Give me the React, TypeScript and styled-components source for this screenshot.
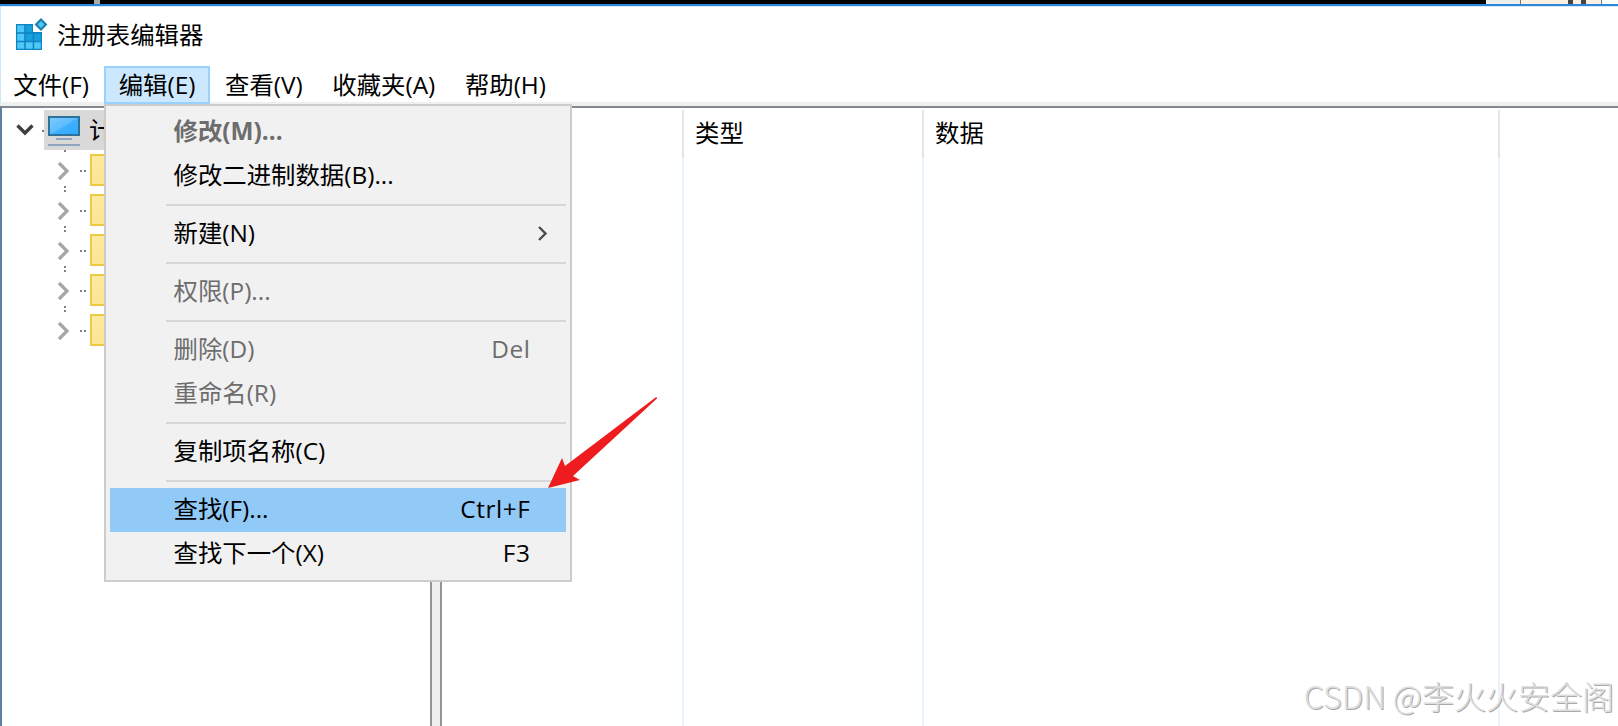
import styled, { createGlobalStyle, css } from 'styled-components';

const GlobalStyle = createGlobalStyle`
  body {
    margin: 0;
    overflow: hidden;
    background: #fff;
    color: #000;
    font: 24.4px/1 'Open Sans', 'Noto Sans CJK SC', sans-serif;
  }

  * {
    box-sizing: border-box;
  }
`;

const Screen = styled.div`
  position: relative;
  display: flex;
  flex-direction: column;
  width: 1618px;
  height: 726px;
  overflow: hidden;
`;

const Backdrop = styled.div`
  display: flex;
  flex: none;
  height: 4px;
  background: #000;
`;

const BackdropPart = styled.span<{ $width: number; $color: string; $edge?: boolean }>`
  flex: none;
  width: ${({ $width }) => $width}px;
  background: ${({ $color }) => $color};
  border-left: ${({ $edge }) => ($edge ? '1px solid #777' : 'none')};
`;

const Window = styled.div`
  flex: 1;
  display: flex;
  flex-direction: column;
  min-height: 0;
  border-top: 2px solid #2b88d8;
  background: #fff;
`;

const Chrome = styled.div`
  flex: none;
  height: 100px;
  border-left: 1px solid #cce6fb;
  border-top: 1px solid #d9ebfa;
  border-bottom: 4px solid #f0f0f0;
`;

const TitleBar = styled.header`
  display: flex;
  align-items: center;
  gap: 9px;
  height: 59px;
  padding: 0 0 3px 13px;
`;

const MenuBar = styled.nav`
  display: flex;
  margin-left: -2.5px;
`;

const MenuButton = styled.div<{ $open?: boolean }>`
  display: flex;
  align-items: center;
  height: 38px;
  padding: 0 12.8px;
  border: 2px solid transparent;
  white-space: nowrap;

  ${({ $open }) =>
    $open &&
    css`
      background: #cce8ff;
      border-color: #99d1ff;
    `}
`;

const Panes = styled.main`
  flex: 1;
  display: flex;
  min-height: 0;
  border-top: 2px solid #828790;
  border-left: 2px solid #5f809f;
`;

const Tree = styled.div`
  flex: none;
  width: 428px;
  padding-top: 2px;
`;

const TreeRow = styled.div<{ $root?: boolean }>`
  display: flex;
  align-items: center;
  height: 40px;
  padding-left: ${({ $root }) => ($root ? 14 : 53)}px;
`;

const Selection = styled.div`
  display: flex;
  align-items: center;
  gap: 9px;
  height: 40px;
  padding: 0 8px 0 4px;
  background: #d9d9d9;
`;

const Folder = styled.span`
  width: 40px;
  height: 32px;
  border: 2px solid #efc944;
  background: linear-gradient(135deg, #ffeaa3, #fbdf85);
`;

const Splitter = styled.div`
  flex: none;
  width: 12px;
  border: solid #8f959b;
  border-width: 0 2px;
  background: #f0f0f0;
`;

const List = styled.div`
  flex: 1;
  display: flex;
`;

const Column = styled.div<{ $width: number }>`
  flex: none;
  display: flex;
  flex-direction: column;
  width: ${({ $width }) => $width}px;

  &::after {
    content: '';
    flex: 1;
    border-right: 2px solid #e9f4ff;
  }
`;

const ColumnHeader = styled.div`
  height: 48px;
  margin-top: 2px;
  padding: 11px 0 0 11px;
  border-right: 2px solid #e5e5e5;
`;

const Menu = styled.div`
  position: absolute;
  top: 104px;
  left: 104px;
  width: 468px;
  height: 478px;
  padding: 4px;
  border: 2px solid #ccc;
  background: #f1f1f1;
`;

const MenuItem = styled.div<{ $disabled?: boolean; $active?: boolean; $strong?: boolean }>`
  display: flex;
  align-items: center;
  justify-content: space-between;
  height: 44px;
  padding: 0 35.5px 2px 63.5px;
  white-space: nowrap;
  color: ${({ $disabled }) => ($disabled ? '#6d6d6d' : '#000')};
  background: ${({ $active }) => ($active ? '#91c9f7' : 'transparent')};
  font-weight: ${({ $strong }) => ($strong ? 700 : 400)};
`;

const Shortcut = styled.span`
  letter-spacing: 0.6px;
`;

const Separator = styled.div`
  height: 2px;
  margin: 6px 0 6px 56px;
  background: #d7d7d7;
`;

const Arrow = styled.svg`
  position: absolute;
  top: 390px;
  left: 540px;
`;

const Watermark = styled.div`
  position: absolute;
  right: 4px;
  bottom: 15px;
  color: #dedede;
  font: 300 32px/32px 'Noto Sans CJK SC', sans-serif;
  text-shadow: 1px 1px 0 #aaa;
  white-space: nowrap;
`;

const Submenu = styled.svg`
  flex: none;
  margin-right: -18.5px;
`;

const RegeditIcon = () => (
  <svg width="34" height="34" viewBox="0 0 34 34">
    <path d="M2 6h17v8h9v18H2z" fill="#0d83c4" />
    <g fill="#4fc8f8">
      <path d="M3.200 7.200h7v7h-7zM3.200 15.700h7v7h-7zM3.200 24.200h7v6.600h-7zM11.700 24.200h7v6.600h-7zM20.200 24.200h6.600v6.600h-6.600z" />
    </g>
    <g fill="#13a0dc">
      <path d="M11.700 7.200h6.300v7h-6.300zM11.700 15.700h7v7h-7zM20.200 15.700h6.600v7h-6.600z" />
    </g>
    <path d="M27 1.500l5 5-5 5-5-5z" fill="#55c3ee" stroke="#137fae" strokeWidth="2" />
  </svg>
);

const ComputerIcon = () => (
  <svg width="32" height="32" viewBox="0 0 32 32">
    <defs>
      <linearGradient id="display" x1="0" y1="0" x2="1" y2="1">
        <stop offset="0" stopColor="#80ccff" />
        <stop offset=".5" stopColor="#5bbcff" />
        <stop offset=".52" stopColor="#3fb0ff" />
        <stop offset="1" stopColor="#2fa9ff" />
      </linearGradient>
    </defs>
    <rect x="1" y="3" width="30" height="18" fill="url(#display)" stroke="#2d7297" strokeWidth="2" />
    <path d="M8 25h16M0 31h32" stroke="#8fa5bd" strokeWidth="2" />
  </svg>
);

const RootChevron = () => (
  <svg width="28" height="20" viewBox="0 0 28 20" fill="none">
    <path d="M1.500 5.500l7.500 7.500 7.500-7.500" stroke="#404040" strokeWidth="3.400" />
    <path d="M26 11h2" stroke="#777" strokeWidth="2" />
  </svg>
);

const Branch = ({ last }: { last: boolean }) => (
  <svg width="35" height="40" viewBox="0 0 35 40" fill="none">
    <path d="M4 13l8 8-8 8" stroke="#a6a6a6" strokeWidth="3.200" />
    <path d="M25 21h2M29 21h2M9 1h2" stroke="#808080" strokeWidth="2" />
    {!last && <path d="M9 37h2" stroke="#808080" strokeWidth="2" />}
  </svg>
);

const SubmenuChevron = () => (
  <Submenu width="12" height="18" viewBox="0 0 12 18" fill="none">
    <path d="M2 3l6.500 6.500L2 16" stroke="#4c4c4c" strokeWidth="2.400" />
  </Submenu>
);

const menus = ['文件(F)', '编辑(E)', '查看(V)', '收藏夹(A)', '帮助(H)'];

const columns = [
  { title: '', width: 242 },
  { title: '类型', width: 240 },
  { title: '数据', width: 576 },
];

export default function App() {
  return (
    <>
      <GlobalStyle />
      <Screen>
        <Backdrop>
          <BackdropPart $width={94} $color="#000" />
          <BackdropPart $width={6} $color="#aaa" />
          <BackdropPart $width={1386} $color="#000" />
          <BackdropPart $width={34} $color="#eee" />
          <BackdropPart $width={48} $color="#fdf0e2" $edge />
          <BackdropPart $width={5} $color="#444" />
          <BackdropPart $width={8} $color="#fdf0e2" />
          <BackdropPart $width={5} $color="#444" />
          <BackdropPart $width={15} $color="#fdf0e2" />
          <BackdropPart $width={17} $color="#fff" $edge />
        </Backdrop>
        <Window>
          <Chrome>
            <TitleBar>
              <RegeditIcon />
              注册表编辑器
            </TitleBar>
            <MenuBar>
              {menus.map((label) => (
                <MenuButton key={label} $open={label === '编辑(E)'}>
                  {label}
                </MenuButton>
              ))}
            </MenuBar>
          </Chrome>
          <Panes>
            <Tree>
              <TreeRow $root>
                <RootChevron />
                <Selection>
                  <ComputerIcon />
                  计算机
                </Selection>
              </TreeRow>
              {[0, 1, 2, 3, 4].map((row) => (
                <TreeRow key={row}>
                  <Branch last={row === 4} />
                  <Folder />
                </TreeRow>
              ))}
            </Tree>
            <Splitter />
            <List>
              {columns.map(({ title, width }) => (
                <Column key={width} $width={width}>
                  <ColumnHeader>{title}</ColumnHeader>
                </Column>
              ))}
            </List>
          </Panes>
        </Window>

        <Menu>
          <MenuItem $disabled $strong>修改(M)...</MenuItem>
          <MenuItem>修改二进制数据(B)...</MenuItem>
          <Separator />
          <MenuItem>
            新建(N)
            <SubmenuChevron />
          </MenuItem>
          <Separator />
          <MenuItem $disabled>权限(P)...</MenuItem>
          <Separator />
          <MenuItem $disabled>
            删除(D)
            <Shortcut>Del</Shortcut>
          </MenuItem>
          <MenuItem $disabled>重命名(R)</MenuItem>
          <Separator />
          <MenuItem>复制项名称(C)</MenuItem>
          <Separator />
          <MenuItem $active>
            查找(F)...
            <Shortcut>Ctrl+F</Shortcut>
          </MenuItem>
          <MenuItem>
            查找下一个(X)
            <Shortcut>F3</Shortcut>
          </MenuItem>
        </Menu>

        <Arrow width="120" height="100" viewBox="540 390 120 100">
          <path d="M548 488l14-30 3 8 90.500-68.500q1.500-1 1.500 1L573 476l7 4z" fill="#ee1c1e" />
        </Arrow>
        <Watermark>CSDN @李火火安全阁</Watermark>
      </Screen>
    </>
  );
}
